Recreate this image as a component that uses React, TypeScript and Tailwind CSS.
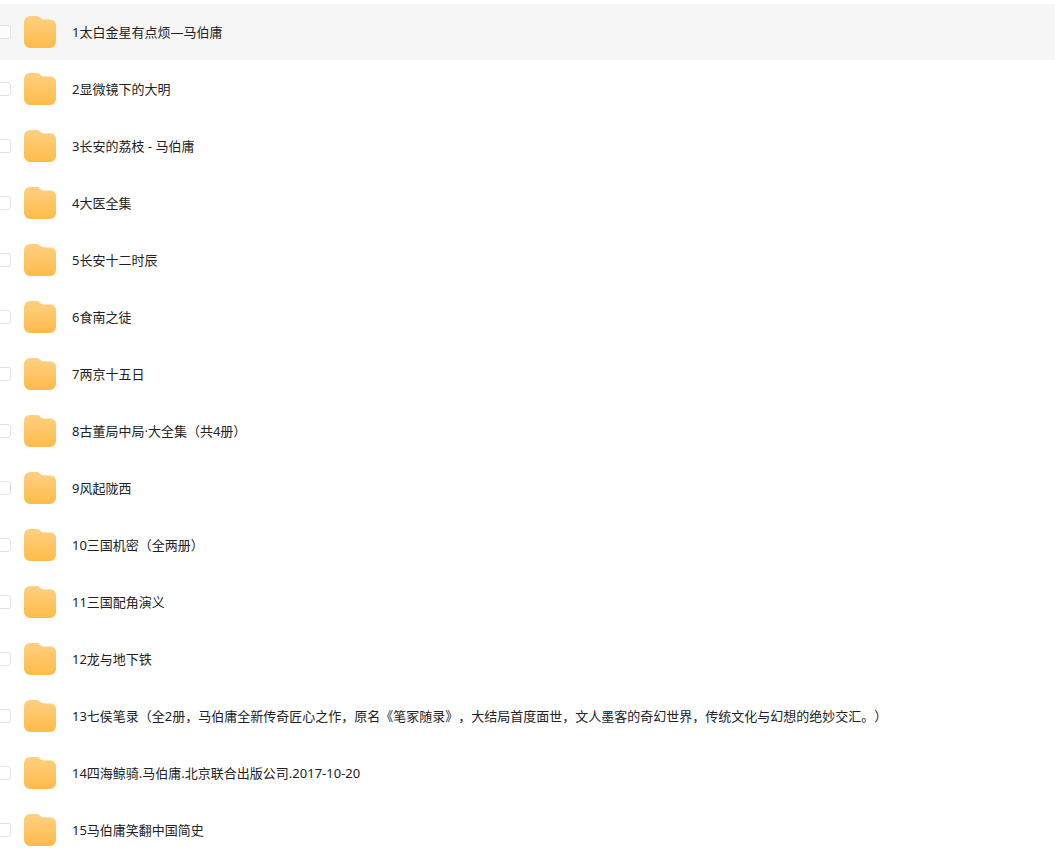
import { useState } from "react"
import { clsx } from "clsx"

const folders = [
  "1太白金星有点烦—马伯庸",
  "2显微镜下的大明",
  "3长安的荔枝 - 马伯庸",
  "4大医全集",
  "5长安十二时辰",
  "6食南之徒",
  "7两京十五日",
  "8古董局中局·大全集（共4册）",
  "9风起陇西",
  "10三国机密（全两册）",
  "11三国配角演义",
  "12龙与地下铁",
  "13七侯笔录（全2册，马伯庸全新传奇匠心之作，原名《笔冢随录》，大结局首度面世，文人墨客的奇幻世界，传统文化与幻想的绝妙交汇。）",
  "14四海鲸骑.马伯庸.北京联合出版公司.2017-10-20",
  "15马伯庸笑翻中国简史"
]

function FolderIcon() {
  return (
    <svg viewBox="0 0 32 32" className="size-8 shrink-0" aria-hidden="true">
      <defs>
        <linearGradient id="folder" x1="0" y1="0" x2="0" y2="1">
          <stop offset="0" stopColor="#ffd080" />
          <stop offset="1" stopColor="#ffbb4a" />
        </linearGradient>
      </defs>
      <path
        d="M14 3h12.5a5.5 5.5 0 0 1 5.5 5.5V14H14z"
        fill="#ffe3b3"
      />
      <path
        d="M6 0h6.6c1.4 0 2.4.5 3.4 1.4l1.6 1.5c.7.7 1.5 1 2.5 1h6.4a5.5 5.5 0 0 1 5.5 5.5V26a6 6 0 0 1-6 6H6a6 6 0 0 1-6-6V6a6 6 0 0 1 6-6z"
        fill="url(#folder)"
      />
    </svg>
  )
}

function FolderRow({
  name,
  active,
  onHover
}: {
  name: string
  active: boolean
  onHover: () => void
}) {
  return (
    <li
      onMouseEnter={onHover}
      className={clsx("flex h-14 items-center", active && "bg-[#f6f6f6]")}
    >
      <input
        type="checkbox"
        aria-label={name}
        className="-ml-[3px] size-3.5 shrink-0 appearance-none rounded-[3px] border border-[#e3e3e3] bg-white checked:border-[#06a7ff] checked:bg-[#06a7ff]"
      />
      <a href="#" className="ml-[13px] flex min-w-0 items-center gap-4">
        <FolderIcon />
        <span className="truncate">{name}</span>
      </a>
    </li>
  )
}

export default function App() {
  const [active, setActive] = useState(0)

  return (
    <main className="h-screen overflow-hidden bg-white pt-1 font-['Noto_Sans','Noto_Sans_CJK_SC',sans-serif] text-[13px] leading-5 text-[#222] [text-spacing-trim:space-all]">
      <ul lang="zh-CN" className="flex flex-col gap-px">
        {folders.map((name, i) => (
          <FolderRow
            key={name}
            name={name}
            active={i === active}
            onHover={() => setActive(i)}
          />
        ))}
      </ul>
    </main>
  )
}
